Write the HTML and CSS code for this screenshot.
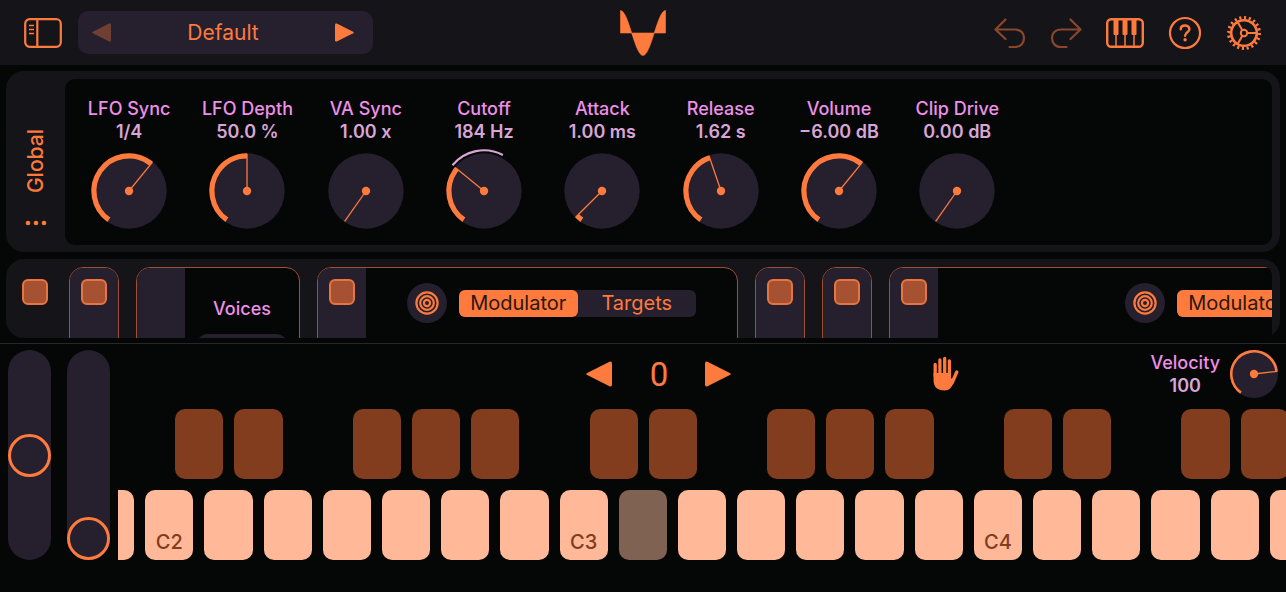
FILE: index.html
```
<!DOCTYPE html>
<html lang="en">
<head>
  <meta charset="UTF-8" />
  <meta name="viewport" content="width=device-width, initial-scale=1.0"/>
  <title>Synth</title>
  <link rel="stylesheet" href="styles.css">
</head>
<body>

  <!-- shared icons -->
  <svg width="0" height="0" class="defs" aria-hidden="true">
    <symbol id="tri-left" viewBox="0 0 26 26">
      <path d="M1.2 12 23.5 0.8Q26 0 26 2.5V23.5Q26 26 23.5 25.2L1.2 14Q-0.6 13 1.2 12Z"/>
    </symbol>
    <symbol id="tri-right" viewBox="0 0 26 26">
      <path d="M24.8 12 2.5 0.8Q0 0 0 2.5V23.5Q0 26 2.5 25.2L24.8 14Q26.6 13 24.8 12Z"/>
    </symbol>
    <symbol id="target" viewBox="0 0 24 24">
      <g fill="none" stroke="currentColor" stroke-width="2.2">
        <circle cx="12" cy="12" r="10.6"/>
        <circle cx="12" cy="12" r="6.8"/>
        <circle cx="12" cy="12" r="3.1"/>
      </g>
    </symbol>
  </svg>

  <header class="topbar">
    <div class="topbar-left">
      <button class="icon-btn" aria-label="Sidebar">
        <svg width="38" height="30" viewBox="0 0 38 30" fill="none" stroke="currentColor" stroke-width="2.2">
          <rect x="1.2" y="1.2" width="35.6" height="27.6" rx="4.5"/>
          <path d="M13.3 1v28"/>
          <path d="M5 7.5h5M5 11.5h5M5 15.5h5" stroke-width="1.5"/>
        </svg>
      </button>
      <div class="preset">
        <button class="arrow" aria-label="Previous preset" disabled><svg width="19" height="19"><use href="#tri-left"/></svg></button>
        <button class="preset-name">Default</button>
        <button class="arrow" aria-label="Next preset"><svg width="19" height="19"><use href="#tri-right"/></svg></button>
      </div>
    </div>

    <svg class="logo" width="46" height="46" viewBox="0 0 46 46">
      <path d="M0.5 23V0.5C8.7 0.5 14.8 45.5 23 45.5S37.3 0.5 45.5 0.5V23Z" stroke="currentColor" stroke-width="0.6"/>
    </svg>

    <div class="topbar-right">
      <button class="icon-btn dim" aria-label="Undo">
        <svg width="32" height="32" viewBox="0 0 32 32" fill="none" stroke="currentColor" stroke-width="2.2" stroke-linecap="round" stroke-linejoin="round">
          <path d="M11.5 2.5 1.5 12.5 11.5 22M1.500 12.500H21C27 12.500 30 16.500 30 21S27 30 21 30H15.500"/>
        </svg>
      </button>
      <button class="icon-btn dim" aria-label="Redo">
        <svg width="32" height="32" viewBox="0 0 32 32" fill="none" stroke="currentColor" stroke-width="2.2" stroke-linecap="round" stroke-linejoin="round">
          <path d="M20.5 2.5 30.500 12.500 20.500 22M30.500 12.500H11C5 12.500 2 16.500 2 21S5 30 11 30H16.500"/>
        </svg>
      </button>
      <button class="icon-btn" aria-label="Keyboard">
        <svg width="38" height="30" viewBox="0 0 38 30" fill="none" stroke="currentColor">
          <rect x="1.2" y="1.2" width="35.6" height="27.6" rx="4" stroke-width="2.4"/>
          <path d="M10 16v12M19 16v12M28 16v12" stroke-width="1.5"/>
          <path d="M7.500 2h5v14a1 1 0 0 1-1 1h-3a1 1 0 0 1-1-1ZM16.500 2h5v14a1 1 0 0 1-1 1h-3a1 1 0 0 1-1-1ZM25.500 2h5v14a1 1 0 0 1-1 1h-3a1 1 0 0 1-1-1Z" fill="currentColor" stroke="none"/>
        </svg>
      </button>
      <button class="icon-btn" aria-label="Help">
        <svg width="34" height="34" viewBox="0 0 34 34" fill="none" stroke="currentColor">
          <circle cx="17" cy="17" r="15" stroke-width="2.2"/>
          <path d="M12.7 13.3C12.7 10.8 14.6 9.5 17 9.5S21.400 10.900 21.400 13.200C21.400 16.200 17.100 16.300 17.100 19.800" stroke-width="2.400" stroke-linecap="round"/>
          <circle cx="17.1" cy="23.8" r="1.7" fill="currentColor" stroke="none"/>
        </svg>
      </button>
      <button class="icon-btn" aria-label="Settings">
        <svg width="36" height="36" viewBox="0 0 36 36" fill="none" stroke="currentColor">
          <circle cx="18" cy="18" r="15.4" stroke-width="3.2" pathLength="40" stroke-dasharray="0.9 1.1"/>
          <circle cx="18" cy="18" r="12.8" stroke-width="2.6"/>
          <circle cx="18" cy="18" r="3.2" stroke-width="2"/>
          <path d="M21 18h10M16.500 15.400 11.500 6.700M16.500 20.600l-5 8.700" stroke-width="2"/>
        </svg>
      </button>
    </div>
  </header>

  <main class="panels">
    <section class="panel">
      <div class="panel-side">
        <h2>Global</h2>
        <button class="more" aria-label="More">
          <svg width="22" height="6" viewBox="0 0 22 6"><circle cx="3" cy="3" r="2.3"/><circle cx="11" cy="3" r="2.3"/><circle cx="19" cy="3" r="2.3"/></svg>
        </button>
      </div>
      <div class="knobs">
        <label class="knob"><span class="name">LFO Sync</span><output>1/4</output><span class="dial"><input type="range" min="0" max="100" step="0.5" value="63.5"></span></label>
        <label class="knob"><span class="name">LFO Depth</span><output>50.0 %</output><span class="dial"><input type="range" min="0" max="100" step="0.5" value="50"></span></label>
        <label class="knob"><span class="name">VA Sync</span><output>1.00 x</output><span class="dial"><input type="range" min="0" max="100" step="0.5" value="0"></span></label>
        <label class="knob"><span class="name">Cutoff</span><output>184 Hz</output><span class="dial"><input type="range" min="0" max="100" step="0.5" value="32.5" data-mod="27"></span></label>
        <label class="knob"><span class="name">Attack</span><output>1.00 ms</output><span class="dial"><input type="range" min="0" max="100" step="0.5" value="3.5"></span></label>
        <label class="knob"><span class="name">Release</span><output>1.62 s</output><span class="dial"><input type="range" min="0" max="100" step="0.5" value="43.5"></span></label>
        <label class="knob"><span class="name">Volume</span><output>−6.00 dB</output><span class="dial"><input type="range" min="0" max="100" step="0.5" value="63.5"></span></label>
        <label class="knob"><span class="name">Clip Drive</span><output>0.00 dB</output><span class="dial"><input type="range" min="0" max="100" step="0.5" value="0"></span></label>
      </div>
    </section>

    <section class="panel modules">
      <div class="module-side"><button class="led" aria-label="Toggle section"></button></div>
      <div class="module-list">
        <div class="module">
          <div class="strip"><button class="led" aria-label="Toggle module 1"></button></div>
        </div>
        <div class="module">
          <div class="strip"></div>
          <div class="voices">
            <span class="name">Voices</span>
            <div class="voices-field"></div>
          </div>
        </div>
        <div class="module">
          <div class="strip"><button class="led" aria-label="Toggle module 3"></button></div>
          <div class="mod-body">
            <button class="round-btn" aria-label="Target"><svg width="24" height="24"><use href="#target"/></svg></button>
            <div class="segmented">
              <button class="active">Modulator</button>
              <button>Targets</button>
            </div>
          </div>
        </div>
        <div class="module">
          <div class="strip"><button class="led" aria-label="Toggle module 4"></button></div>
        </div>
        <div class="module">
          <div class="strip"><button class="led" aria-label="Toggle module 5"></button></div>
        </div>
        <div class="module">
          <div class="strip"><button class="led" aria-label="Toggle module 6"></button></div>
          <div class="mod-body wide">
            <button class="round-btn" aria-label="Target"><svg width="24" height="24"><use href="#target"/></svg></button>
            <div class="segmented">
              <button class="active">Modulator</button>
              <button>Targets</button>
            </div>
          </div>
        </div>
      </div>
    </section>
  </main>

  <section class="player">
    <div class="wheels">
      <input type="range" class="wheel" min="0" max="100" value="50" aria-label="Pitch bend">
      <input type="range" class="wheel" min="0" max="100" value="0" aria-label="Mod wheel">
    </div>

    <div class="keyboard">
      <div class="key-controls">
        <div class="octave">
          <button class="arrow" aria-label="Octave down"><svg width="26" height="26"><use href="#tri-left"/></svg></button>
          <output>0</output>
          <button class="arrow" aria-label="Octave up"><svg width="26" height="26"><use href="#tri-right"/></svg></button>
        </div>
        <button class="icon-btn hold" aria-label="Hold">
          <svg width="28" height="36" viewBox="0 0 28 36" fill="none" stroke="currentColor" stroke-linecap="round">
            <path d="M3.2 8.5V20M7.9 4V20M12.7 2.3V20M17.4 4.8V20" stroke-width="3.3"/>
            <path d="M24.8 16 20 27" stroke-width="3.4"/>
            <path d="M1.55 17H19V22.500L22 22 21.500 26C20 31.500 17.500 34.500 12.500 34.500 5.500 34.500 1.550 31 1.550 24Z" fill="currentColor" stroke="none"/>
          </svg>
        </button>
        <label class="velocity">
          <span class="velocity-text"><span class="name">Velocity</span><output>100</output></span>
          <span class="dial small"><input type="range" min="0" max="127" value="100"></span>
        </label>
      </div>

      <div class="keys black-keys">
        <i></i><button aria-label="C#2"></button><button aria-label="D#2"></button>
        <i></i><button aria-label="F#2"></button><button aria-label="G#2"></button><button aria-label="A#2"></button>
        <i></i><button aria-label="C#3"></button><button aria-label="D#3"></button>
        <i></i><button aria-label="F#3"></button><button aria-label="G#3"></button><button aria-label="A#3"></button>
        <i></i><button aria-label="C#4"></button><button aria-label="D#4"></button>
        <i></i><button aria-label="F#4"></button><button aria-label="G#4"></button>
      </div>
      <div class="keys white-keys">
        <button aria-label="B1"></button>
        <button>C2</button><button aria-label="D2"></button><button aria-label="E2"></button><button aria-label="F2"></button><button aria-label="G2"></button><button aria-label="A2"></button><button aria-label="B2"></button>
        <button>C3</button><button class="pressed" aria-label="D3"></button><button aria-label="E3"></button><button aria-label="F3"></button><button aria-label="G3"></button><button aria-label="A3"></button><button aria-label="B3"></button>
        <button>C4</button><button aria-label="D4"></button><button aria-label="E4"></button><button aria-label="F4"></button><button aria-label="G4"></button><button aria-label="A4"></button>
      </div>
    </div>
  </section>

  <script>
    const SWEEP = 290;
    const START = -145;

    // ring segment, angles in degrees clockwise from the top
    function ring(cls, c, r, from, length) {
      return `<circle class="${cls}" cx="${c}" cy="${c}" r="${r}" pathLength="360"
        stroke-dasharray="${length} 360" transform="rotate(${from - 90} ${c} ${c})"/>`;
    }

    function drawDial(dial) {
      const input = dial.querySelector('input');
      const small = dial.classList.contains('small');
      const size = small ? 48 : 84;
      const c = size / 2;
      const radius = small ? 24 : 37.7;
      const width = small ? 2.6 : 5.2;
      const amount = (input.value - input.min) / (input.max - input.min) * SWEEP;
      const angle = START + amount;

      let svg = `<circle class="disc" cx="${c}" cy="${c}" r="${radius}"/>`;
      if (amount > 0) {
        svg += ring('arc', c, radius - width / 2, START, amount);
      }
      if (input.dataset.mod) {
        svg += ring('mod', c, 40.7, angle, input.dataset.mod / 100 * SWEEP);
      }
      svg += `<path class="needle" d="M${c} ${c}V${c - radius + 0.5}" transform="rotate(${angle} ${c} ${c})"/>`;
      svg += `<circle class="pin" cx="${c}" cy="${c}" r="4.2"/>`;

      const el = dial.querySelector('svg') || document.createElementNS('http://www.w3.org/2000/svg', 'svg');
      el.setAttribute('width', size);
      el.setAttribute('height', size);
      el.style.setProperty('--arc-width', width);
      el.innerHTML = svg;
      dial.prepend(el);
    }

    document.querySelectorAll('.dial').forEach((dial) => {
      drawDial(dial);
      dial.querySelector('input').addEventListener('input', () => drawDial(dial));
    });
  </script>

</body>
</html>
```

FILE: styles.css
```
:root {
  --bg: #050706;
  --panel: #141419;
  --surface: #251f2e;
  --orange: #ff7a3d;
  --outline: #a04f33;
  --pink: #ee8fe8;
  --pink-soft: #d9a5d6;
  --white-key: #ffb999;
  --black-key: #813d1d;
}

* {
  box-sizing: border-box;
}

body {
  margin: 0;
  min-height: 100vh;
  background-color: var(--bg);
  color: var(--orange);
  fill: currentColor;
  font-family: Inter, "Liberation Sans", sans-serif;
  font-size: 18px;
  line-height: 23px;
  overflow-x: hidden;
}

button {
  display: block;
  margin: 0;
  padding: 0;
  border: none;
  background: none;
  color: inherit;
  font: inherit;
  cursor: pointer;
}

svg {
  display: block;
}

.defs {
  position: absolute;
}

/* top bar */
.topbar {
  display: grid;
  grid-template-columns: 1fr auto 1fr;
  align-items: center;
  height: 65px;
  padding: 0 24px;
  background-color: var(--panel);
}

.topbar-left {
  display: flex;
  align-items: center;
  gap: 16px;
}

.preset {
  display: flex;
  align-items: center;
  justify-content: space-between;
  width: 295px;
  height: 43px;
  padding: 0 19px 0 14px;
  border-radius: 10px;
  background-color: var(--surface);
}

.preset-name {
  font-size: 21px;
}

.arrow:disabled {
  opacity: 0.35;
}

.topbar-right {
  display: flex;
  align-items: center;
  justify-content: flex-end;
  gap: 24px;
}

.dim {
  opacity: 0.5;
}

/* panels */
.panels {
  display: flex;
  flex-direction: column;
  gap: 7px;
  padding: 6px 6px 5px;
  border-bottom: 1px solid #26262b;
}

.panel {
  display: flex;
  padding: 8px 8px 7px 0;
  border-radius: 18px;
  background-color: var(--panel);
}

.panel-side {
  display: flex;
  flex-direction: column;
  align-items: center;
  justify-content: flex-end;
  gap: 27px;
  width: 59px;
  padding-bottom: 19px;
}

.panel-side h2 {
  margin: 0;
  font-size: 21px;
  font-weight: 500;
  writing-mode: vertical-rl;
  transform: rotate(180deg);
}

.knobs {
  flex: 1;
  display: grid;
  grid-template-columns: repeat(10, 1fr);
  padding: 18px 19px 12px 5px;
  border-radius: 10px;
  background-color: var(--bg);
}

.knob {
  display: flex;
  flex-direction: column;
  align-items: center;
}

.name {
  color: var(--pink);
  font-weight: 500;
}

output {
  color: var(--pink-soft);
  font-weight: 600;
}

.dial {
  position: relative;
  margin-top: 6px;
}

.dial.small {
  margin-top: 0;
}

.dial input {
  position: absolute;
  inset: 0;
  width: 100%;
  height: 100%;
  margin: 0;
  opacity: 0;
  cursor: pointer;
}

.disc {
  fill: var(--surface);
}

.arc {
  fill: none;
  stroke: var(--orange);
  stroke-width: var(--arc-width);
}

.mod {
  fill: none;
  stroke: var(--pink-soft);
  stroke-width: 2.2;
}

.needle {
  stroke: var(--orange);
  stroke-width: 1.3;
}

/* modules */
.modules {
  height: 79px;
  padding: 8px 8px 0 0;
  overflow: hidden;
}

.module-side {
  flex: none;
  width: 63px;
  padding: 12px 16px;
}

.led {
  width: 26px;
  height: 26px;
  border: 2px solid #e8743f;
  border-radius: 6px;
  background-color: #a65232;
}

.module-list {
  flex: 1;
  display: flex;
  gap: 17px;
  min-width: 0;
  overflow: hidden;
  border-top-right-radius: 8px;
}

.module {
  flex: none;
  display: flex;
  height: 90px;
  border: 1px solid var(--outline);
  border-radius: 14px;
  background-color: var(--bg);
  overflow: hidden;
}

.strip {
  width: 48px;
  padding: 11px;
  background-color: var(--surface);
}

.voices {
  width: 114px;
  padding: 29px 12px 0;
  text-align: center;
}

.voices-field {
  height: 30px;
  margin-top: 14px;
  border-radius: 10px;
  background-color: var(--surface);
}

.mod-body {
  display: flex;
  align-items: flex-start;
  gap: 12px;
  padding: 15px 41px;
}

.mod-body.wide {
  padding: 15px 187px;
}

.round-btn {
  display: grid;
  place-items: center;
  width: 40px;
  height: 40px;
  border-radius: 50%;
  background-color: var(--surface);
}

.segmented {
  display: grid;
  grid-template-columns: 1fr 1fr;
  width: 237px;
  height: 27px;
  margin-top: 7px;
  border-radius: 6px;
  background-color: var(--surface);
  font-size: 20px;
}

.segmented .active {
  border-radius: 6px;
  background-color: var(--orange);
  color: #2b1710;
}

/* wheels and keyboard */
.player {
  display: flex;
  padding: 6px 0 32px 8px;
}

.wheels {
  flex: none;
  display: flex;
  gap: 16px;
  width: 110px;
}

.wheel {
  appearance: none;
  writing-mode: vertical-lr;
  direction: rtl;
  width: 43px;
  height: 210px;
  margin: 0;
  border-radius: 22px;
  background-color: var(--surface);
  cursor: pointer;
}

.wheel::-webkit-slider-thumb {
  appearance: none;
  width: 43px;
  height: 43px;
  border: 3px solid var(--orange);
  border-radius: 50%;
  background-color: var(--surface);
}

.keyboard {
  flex: 1;
  min-width: 0;
  overflow: hidden;
}

.key-controls {
  display: grid;
  grid-template-columns: 28fr auto 12fr auto 19fr;
  align-items: center;
  height: 48px;
  padding-right: 8px;
}

.octave {
  grid-column: 2;
  display: flex;
  align-items: center;
}

.octave output {
  width: 93px;
  color: var(--orange);
  font-family: Roboto, sans-serif;
  font-size: 33px;
  font-weight: 400;
  text-align: center;
}

.hold {
  grid-column: 4;
}

.velocity {
  grid-column: 5;
  justify-self: end;
  display: flex;
  align-items: center;
  gap: 10px;
}

.velocity-text {
  display: flex;
  flex-direction: column;
  align-items: center;
}

.keys {
  display: grid;
  grid-template-columns: repeat(21, 1fr);
  column-gap: 11px;
}

.keys button {
  height: 70px;
  border-radius: 10px;
}

.black-keys {
  margin: 11px -62px 0 -2px;
}

.black-keys button {
  background-color: var(--black-key);
}

.white-keys {
  margin: 11px -32px 0;
}

.white-keys button {
  padding-top: 35px;
  background-color: var(--white-key);
  color: var(--black-key);
  font-size: 20px;
  font-weight: 500;
}

.white-keys .pressed {
  background-color: #806252;
}
```
